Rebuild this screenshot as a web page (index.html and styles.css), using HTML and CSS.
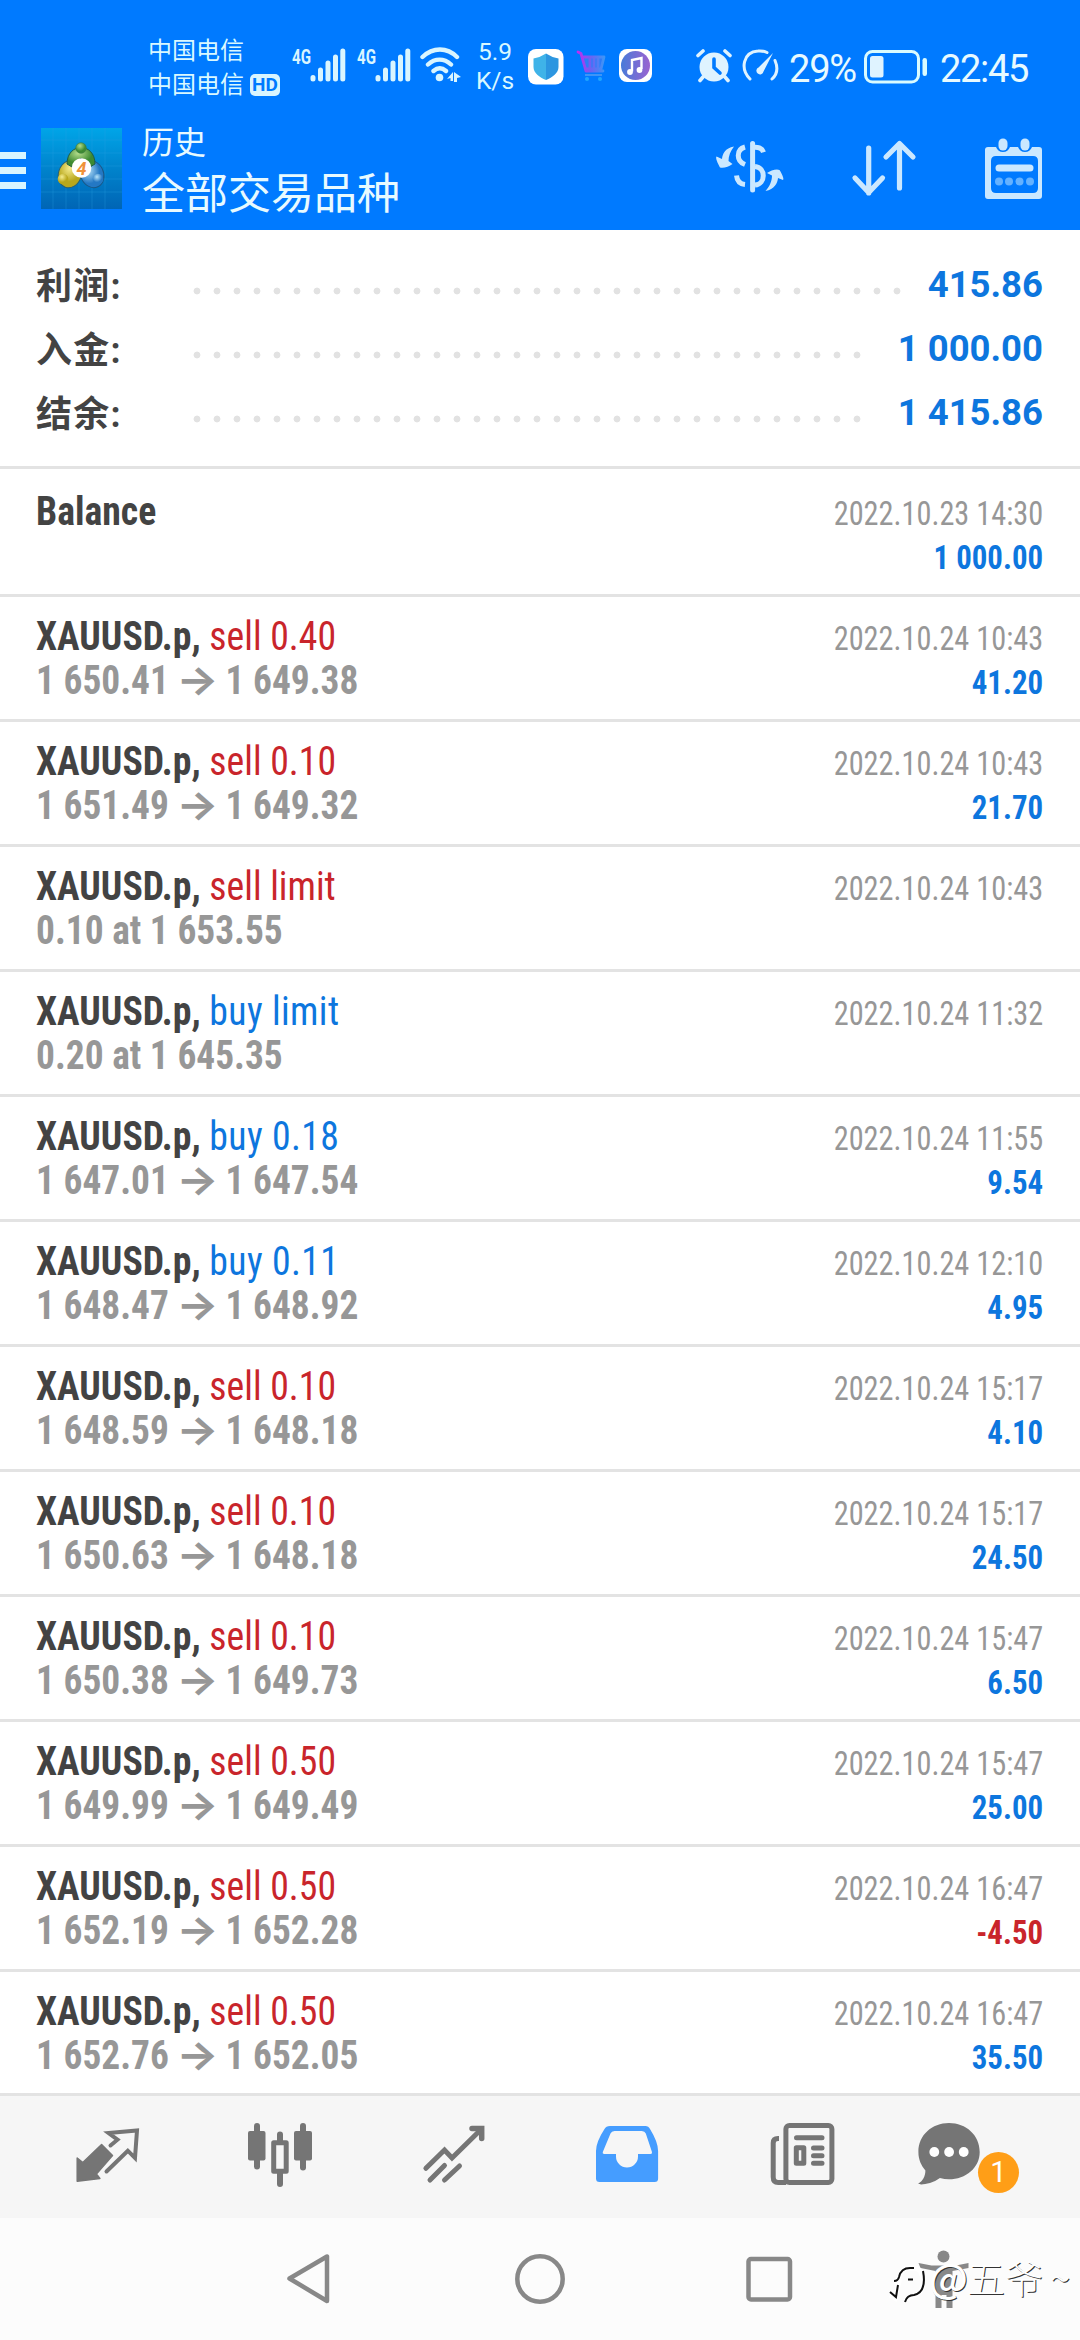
FILE: index.html
```html
<!DOCTYPE html>
<html lang="zh-CN">
<head>
<meta charset="utf-8">
<title>历史</title>
<link rel="stylesheet" href="styles.css">
</head>
<body>
<div class="screen">
  <header class="header">
    <div class="status">
      <div class="carriers">
        <div>中国电信</div>
        <div class="carrier-hd">中国电信<span class="hd">HD</span></div>
      </div>
      <div class="signal"><span class="net">4G</span>
        <svg width="36" height="34" viewBox="0 0 36 34"><path d="M3 29.500v1.500M10.500 22v9M18 15v16M25.500 9v22M32.800 3v28"/></svg>
      </div>
      <div class="signal second"><span class="net">4G</span>
        <svg width="36" height="34" viewBox="0 0 36 34"><path d="M3 29.500v1.500M10.500 22v9M18 15v16M25.500 9v22M32.800 3v28"/></svg>
      </div>
      <svg class="wifi" width="42" height="36" viewBox="0 0 42 36">
        <path d="M2.500 10C13 0 27 0 37 10M8 17.500c7-6.500 16-6.500 23 0M13.500 24c4-3.500 8.500-3.500 12.500 0" fill="none" stroke="#d9f5ff" stroke-width="4.400" stroke-linecap="round"/>
        <circle cx="19.500" cy="30.500" r="3.800" fill="#d9f5ff"/>
        <path d="M27 32l6-7v9h-2.500v-3zM34 25l7 5-4 1v4h-3z" fill="#d9f5ff"/>
      </svg>
      <div class="speed"><div>5.9</div><div>K/s</div></div>
      <div class="apps">
        <svg class="shield" width="36" height="36" viewBox="0 0 36 36">
          <rect width="35.500" height="35.500" rx="8" fill="#fff"/>
          <path d="M18 4.500Q24 8.500 30.500 9.500V18c0 6-6 10.500-12.500 13z" fill="#2c96e0"/><path d="M18 4.500Q12 8.500 5.500 9.500V18c0 6 6 10.500 12.500 13z" fill="#3fb3e8"/>
        </svg>
        <svg class="cart" width="32" height="34" viewBox="0 0 32 34">
          <defs><linearGradient id="cart" x1="0" x2="1"><stop offset="0" stop-color="#c22bf0"/><stop offset=".5" stop-color="#6b63f2"/><stop offset="1" stop-color="#3e94f6"/></linearGradient></defs>
          <path d="M7 8H28l-3 12H10z" fill="#4a7df4" fill-opacity=".6"/>
          <path d="M2 3l3 1.500 5 17.500H27M7 8H28l-3 12H10M14 10v9M18 10v9M22 10v9" fill="none" stroke="url(#cart)" stroke-width="2.800" stroke-linecap="round" stroke-linejoin="round"/>
          <circle cx="11" cy="30" r="2" fill="#1fa5ff"/><circle cx="24" cy="30" r="2" fill="#1fa5ff"/><path d="M9 26H26" stroke="#3e94f6" stroke-width="2"/>
        </svg>
        <svg class="music" width="34" height="34" viewBox="0 0 34 34">
          <defs><linearGradient id="disc" x1="0" x2="1"><stop offset="0" stop-color="#487bd9"/><stop offset="1" stop-color="#9a63d0"/></linearGradient></defs>
          <rect width="33" height="33" rx="8" fill="#fff"/><circle cx="16.500" cy="16.500" r="14.500" fill="url(#disc)"/>
          <path d="M13 22.500V11l9.500-2v11" fill="none" stroke="#fff" stroke-width="2.400"/><circle cx="11" cy="23" r="2.900" fill="#fff"/><circle cx="20.500" cy="21" r="2.900" fill="#fff"/>
        </svg>
      </div>
      <svg class="alarm" width="36" height="34" viewBox="0 0 36 34">
        <circle cx="18" cy="18" r="14.500" fill="#dff3ff"/>
        <path d="M2 6.500L7 2M34 6.500L29 2M7 28l-3 3.500M29 28l3 3.500" stroke="#dff3ff" stroke-width="3.600" stroke-linecap="round"/>
        <path d="M18 10v8.500l6 5.500" fill="none" stroke="#007aff" stroke-width="3.600" stroke-linecap="round"/>
      </svg>
      <svg class="gauge" width="38" height="34" viewBox="0 0 38 34">
        <path d="M8 30C-2 20 1 3 16 2q5-.500 9 1.500M33 11.500c3 7 2 14-3 18.500" fill="none" stroke="#dff3ff" stroke-width="3" stroke-linecap="round"/>
        <path d="M31 4L16.500 18.500a3.600 3.600 0 1 0 5 4z" fill="#dff3ff"/>
      </svg>
      <div class="percent">29%</div>
      <svg class="battery" width="66" height="34" viewBox="0 0 66 34">
        <rect x="1.500" y="1.500" width="53" height="30.500" rx="7" fill="none" stroke="#d9fbff" stroke-width="3"/>
        <rect x="6" y="6" width="13.500" height="21.500" rx="2.500" fill="#dff3ff"/><rect x="58.500" y="8" width="4.500" height="18" rx="2.200" fill="#d9fbff"/>
      </svg>
      <div class="clock">22:45</div>
    </div>
    <div class="appbar">
      <div class="menu"><i></i><i></i><i></i></div>
      <svg class="logo" width="81" height="81" viewBox="0 0 81 81">
        <defs>
          <linearGradient id="sky" x1="0" y1="0" x2="0" y2="1"><stop offset="0" stop-color="#00a5e8"/><stop offset=".5" stop-color="#0083cc"/><stop offset="1" stop-color="#0065b5"/></linearGradient>
          <radialGradient id="gr" cx=".4" cy=".3"><stop offset="0" stop-color="#b5dd8c"/><stop offset="1" stop-color="#3d8a32"/></radialGradient>
          <radialGradient id="ye" cx=".4" cy=".3"><stop offset="0" stop-color="#f5ec8f"/><stop offset="1" stop-color="#b9a81c"/></radialGradient>
          <radialGradient id="bl" cx=".4" cy=".3"><stop offset="0" stop-color="#b9e4fa"/><stop offset="1" stop-color="#2478c4"/></radialGradient>
        </defs>
        <rect width="81" height="81" fill="url(#sky)"/>
        <path d="M12 0v81M25 0v81M38 0v81M51 0v81M64 0v81M0 12h81M0 25h81M0 38h81M0 51h81M0 64h81" stroke="#2ba3e0" stroke-opacity=".3"/>
        <ellipse cx="29" cy="46" rx="11.500" ry="14" fill="url(#ye)" stroke="#286075" transform="rotate(20 29 46)"/>
        <ellipse cx="51" cy="46" rx="11.500" ry="14" fill="url(#bl)" stroke="#1a5785" transform="rotate(-25 51 46)"/>
        <path d="M26 36c0-22 28-22 28 0l-5 3-9-9-9 9z" fill="url(#gr)" stroke="#1f5c4a"/>
        <circle cx="40" cy="20" r="5.300" fill="url(#gr)" stroke="#3d7a45" stroke-width=".6"/><circle cx="22" cy="51" r="5.300" fill="url(#ye)"/><circle cx="57" cy="51" r="5.300" fill="url(#bl)"/>
        <circle cx="40.500" cy="40" r="9.800" fill="#fff"/>
        <text x="40.500" y="46.500" text-anchor="middle" font-family="Roboto, sans-serif" font-weight="700" font-style="italic" font-size="18" fill="#f0923a">4</text>
      </svg>
      <div class="titles"><div class="title">历史</div><div class="subtitle">全部交易品种</div></div>
      <svg class="act money" width="72" height="64" viewBox="0 0 72 64">
        <g fill="none" stroke="#cbe8ff" stroke-width="5">
          <path d="M38.600 8.500v46.500" stroke-linecap="round"/>
          <path d="M31 12c-9 2.500-9 14 0 17.500M41 12.200c5 0 7.500 2 8.500 5M41 31.500c11 1 11 17.500 0 18.500M31 49.500c-5-.500-8-4-8.500-9" />
        </g>
        <path d="M20 11.500C11 13 8.500 19 8 24L2.500 21.500c-1.500 2 2 8 3.500 11 3 1 9-.500 12.500-3.500l-4-3c0-5 2-10 5.500-14.500zM51.500 56c9-1.500 12-8 12.500-13l5 2c1.500-1.500-2-8-3.500-10-3-1.500-9 .500-12.500 3l5 2.500c0 6-2.500 11-6.500 15.500z" fill="#cbe8ff"/>
      </svg>
      <svg class="act sort" width="72" height="64" viewBox="0 0 72 64">
        <path d="M21.700 14v45M8 44l13.700 14.500L35.500 44M52.500 54V10M39 23L52.500 9.500 66 23" fill="none" stroke="#cbe8ff" stroke-width="5.200" stroke-linecap="round" stroke-linejoin="round"/>
      </svg>
      <svg class="act" width="66" height="68" viewBox="0 0 66 68">
        <path d="M8 14h8q2 5 7 5t7-5h8q2 5 7 5t7-5h7q3 0 3 3v46q0 3-3 3H8q-3 0-3-3V17q0-3 3-3zM16 23q-5 0-5 5v27q0 5 5 5H53q5 0 5-5V28q0-5-5-5z" fill="#cbe8ff" fill-rule="evenodd"/>
        <rect x="18.500" y="5.500" width="9" height="12" rx="4.500" fill="#cbe8ff"/><rect x="40.500" y="5.500" width="9" height="12" rx="4.500" fill="#cbe8ff"/>
        <path d="M19 35H50" stroke="#cbe8ff" stroke-width="7" stroke-linecap="round"/>
        <g fill="#65b2ff"><circle cx="19" cy="48.500" r="4"/><circle cx="29" cy="48.500" r="4"/><circle cx="39.500" cy="48.500" r="4"/><circle cx="50" cy="48.500" r="4"/></g>
      </svg>
    </div>
  </header>

  <section class="summary">
    <div class="sum-row"><span class="sum-label">利润:</span><span class="dots dots-long"></span><span class="sum-value">415.86</span></div>
    <div class="sum-row"><span class="sum-label">入金:</span><span class="dots"></span><span class="sum-value">1 000.00</span></div>
    <div class="sum-row"><span class="sum-label">结余:</span><span class="dots"></span><span class="sum-value">1 415.86</span></div>
  </section>

  <main class="list">
    <div class="row first"><div class="left"><div class="name">Balance</div></div><div class="right"><div class="date">2022.10.23 14:30</div><div class="profit">1 000.00</div></div></div>
    <div class="row"><div class="left"><div class="name">XAUUSD.p, <span class="sell">sell 0.40</span></div><div class="price">1 650.41 <span class="arrow">→</span> 1 649.38</div></div><div class="right"><div class="date">2022.10.24 10:43</div><div class="profit">41.20</div></div></div>
    <div class="row"><div class="left"><div class="name">XAUUSD.p, <span class="sell">sell 0.10</span></div><div class="price">1 651.49 <span class="arrow">→</span> 1 649.32</div></div><div class="right"><div class="date">2022.10.24 10:43</div><div class="profit">21.70</div></div></div>
    <div class="row"><div class="left"><div class="name">XAUUSD.p, <span class="sell">sell limit</span></div><div class="price">0.10 at 1 653.55</div></div><div class="right"><div class="date">2022.10.24 10:43</div></div></div>
    <div class="row"><div class="left"><div class="name">XAUUSD.p, <span class="buy">buy limit</span></div><div class="price">0.20 at 1 645.35</div></div><div class="right"><div class="date">2022.10.24 11:32</div></div></div>
    <div class="row"><div class="left"><div class="name">XAUUSD.p, <span class="buy">buy 0.18</span></div><div class="price">1 647.01 <span class="arrow">→</span> 1 647.54</div></div><div class="right"><div class="date">2022.10.24 11:55</div><div class="profit">9.54</div></div></div>
    <div class="row"><div class="left"><div class="name">XAUUSD.p, <span class="buy">buy 0.11</span></div><div class="price">1 648.47 <span class="arrow">→</span> 1 648.92</div></div><div class="right"><div class="date">2022.10.24 12:10</div><div class="profit">4.95</div></div></div>
    <div class="row"><div class="left"><div class="name">XAUUSD.p, <span class="sell">sell 0.10</span></div><div class="price">1 648.59 <span class="arrow">→</span> 1 648.18</div></div><div class="right"><div class="date">2022.10.24 15:17</div><div class="profit">4.10</div></div></div>
    <div class="row"><div class="left"><div class="name">XAUUSD.p, <span class="sell">sell 0.10</span></div><div class="price">1 650.63 <span class="arrow">→</span> 1 648.18</div></div><div class="right"><div class="date">2022.10.24 15:17</div><div class="profit">24.50</div></div></div>
    <div class="row"><div class="left"><div class="name">XAUUSD.p, <span class="sell">sell 0.10</span></div><div class="price">1 650.38 <span class="arrow">→</span> 1 649.73</div></div><div class="right"><div class="date">2022.10.24 15:47</div><div class="profit">6.50</div></div></div>
    <div class="row"><div class="left"><div class="name">XAUUSD.p, <span class="sell">sell 0.50</span></div><div class="price">1 649.99 <span class="arrow">→</span> 1 649.49</div></div><div class="right"><div class="date">2022.10.24 15:47</div><div class="profit">25.00</div></div></div>
    <div class="row"><div class="left"><div class="name">XAUUSD.p, <span class="sell">sell 0.50</span></div><div class="price">1 652.19 <span class="arrow">→</span> 1 652.28</div></div><div class="right"><div class="date">2022.10.24 16:47</div><div class="profit loss">-4.50</div></div></div>
    <div class="row"><div class="left"><div class="name">XAUUSD.p, <span class="sell">sell 0.50</span></div><div class="price">1 652.76 <span class="arrow">→</span> 1 652.05</div></div><div class="right"><div class="date">2022.10.24 16:47</div><div class="profit">35.50</div></div></div>
  </main>

  <nav class="tabs">
    <div class="tab"><svg viewBox="0 0 72 72">
      <path d="M5.200 39l5.600 4.500L29.600 25.500 40.500 36.500 24.400 55l3.500 4.500L5.200 62.200z" fill="#757575" stroke="#757575" stroke-width="1.500" stroke-linejoin="round"/>
      <path d="M38.500 26.500l7-5.800-9-6.700 28.500-2.500-2 27.500-7.200-7.300L34.500 52.500" fill="none" stroke="#757575" stroke-width="4" stroke-linecap="round"/></svg></div>
    <div class="tab"><svg viewBox="0 0 72 72" fill="#757575">
      <rect x="3" y="12" width="17.500" height="29.500" rx="2"/><rect x="9" y="4" width="6" height="46.500" rx="3"/>
      <rect x="49" y="12" width="18" height="29.500" rx="2"/><rect x="55" y="4" width="6" height="47.500" rx="3"/>
      <path d="M35 15.500v7M35 54v11" stroke="#757575" stroke-width="6" stroke-linecap="round"/><rect x="28.700" y="23.700" width="12.500" height="28.500" fill="none" stroke="#757575" stroke-width="5" stroke-linejoin="round"/></svg></div>
    <div class="tab"><svg viewBox="0 0 72 72" fill="none" stroke="#757575" stroke-width="5">
      <path d="M7.900 49.300L26.500 31l7.500 8L62.500 11M12 61L26.500 46.500M26.500 61L41.500 47" stroke-linecap="round"/><path d="M54 9.500H63.700V19.500" stroke-width="5.500" stroke-linecap="round"/></svg></div>
    <div class="tab"><svg viewBox="0 0 72 72">
      <path d="M19 7H54.500q3 0 4.500 3 8.100 13 8.100 22V59.500q0 3.500-3.500 3.500H8.500q-3.500 0-3.500-3.500V32q0-9 8.500-22 1.500-3 5.500-3zM23.500 12q-3 0-4 2.500L12 32.500q-1 2.500 1.500 2.500H25v2.500a11 11 0 0 0 22 0V35H59.500q2 0 1.300-2.500l-6-18q-1-2.500-4-2.500z" fill="#459dff" fill-rule="evenodd"/></svg></div>
    <div class="tab"><svg viewBox="0 0 72 72" fill="none" stroke="#757575" stroke-width="5">
      <rect x="21.900" y="6.500" width="46" height="57" rx="3.500"/><path d="M15 19.500h-1q-4.800 0-4.800 4.500V58q0 5.500 5 5.500h8"/>
      <path d="M32.500 18.700H58M49.500 29H58M49.500 36.700H58M49.500 44.300H58" stroke-linecap="round"/><rect x="32.300" y="28.800" width="7.500" height="15.500" stroke-linejoin="round"/></svg></div>
    <div class="tab chat"><svg viewBox="0 0 72 72">
      <path d="M35 4C18 4 4.400 16 4.400 33c0 8 3 13.500 7 18.500 0 6-3 11-7 13 0 2 13 1 21.500-5.500 3 .900 6 1.300 9 1.300 17 0 30.800-11.500 30.800-27.300C65.700 16 52 4 35 4z" fill="#757575"/>
      <g fill="#fff"><circle cx="20.300" cy="33" r="4.900"/><circle cx="35.100" cy="33" r="4.900"/><circle cx="49.700" cy="33" r="4.900"/></g></svg><span class="badge">1</span></div>
  </nav>

  <footer class="navbar">
    <svg viewBox="0 0 60 60" fill="none" stroke="#888" stroke-width="4.500" stroke-linejoin="round"><path d="M8.500 30.500L46 8.500V53z"/></svg>
    <svg viewBox="0 0 60 60" fill="none" stroke="#888" stroke-width="4.500"><circle cx="30" cy="31" r="22.700"/></svg>
    <svg viewBox="0 0 60 60" fill="none" stroke="#888" stroke-width="4.500"><rect x="9.500" y="11" width="41.500" height="40.500" rx="2.500"/></svg>
    <svg viewBox="0 0 60 60" fill="#888"><circle cx="30.500" cy="8.500" r="6"/><path d="M5.500 15l13 2.500H43L55.500 15v5L39.500 23v37h-6V47h-5v13h-6V23L7.500 20z"/></svg>
  </footer>

  <div class="watermark">
    <svg width="42" height="48" viewBox="0 0 42 48" fill="none">
      <path d="M4 38l5 3 4-16H8c6-1 6-14 14-14h6c12 0 12 26 0 28-3 0-6 2-7 5" stroke="#fff" stroke-width="5"/>
      <path d="M8 24q4 0 5-4 2-9 11-9h4M22 22.500h5M12 28L10 40l-6-5M37 14q4 21-9 24-7 0-9 7" stroke="#111" stroke-width="2"/>
    </svg><span class="wm-text"><span class="wm-at">@</span>五爷<span class="wm-tilde">~</span></span>
  </div>
</div>
</body>
</html>
```
FILE: styles.css
```css
* { box-sizing: border-box; }
body { margin: 0; background: #fff; font-family: Roboto, "Noto Sans CJK SC", sans-serif; }
svg { display: block; flex: none; }
.screen { position: relative; display: flex; flex-direction: column; width: 1080px; height: 2340px; overflow: hidden; background: #fff; }

.header { flex: none; height: 230px; background: #007aff; color: #e8faff; }
.status { display: flex; align-items: flex-start; height: 108px; padding: 33px 0 0 148px; }
.carriers { width: 144px; padding-top: 1px; font-size: 24px; line-height: 34px; color: #d9f8ff; white-space: nowrap; }
.carrier-hd { display: flex; align-items: center; }
.hd { width: 30px; height: 22px; margin-left: 6px; border-radius: 5px; background: #d9f5ff; color: #007aff; font-size: 19px; font-weight: 700; line-height: 22px; text-align: center; }
.signal { display: flex; align-items: flex-start; width: 65px; padding-top: 15px; }
.signal path { stroke: #d9f5ff; stroke-width: 5; stroke-linecap: round; }
.net { width: 18px; height: 20px; font-size: 21px; font-weight: 700; line-height: 18px; color: #d9f5ff; transform: scaleX(.72); transform-origin: left; }
.second { width: 63px; }
.wifi { margin-top: 14px; }
.speed { width: 66px; padding-top: 5px; font-size: 24.500px; line-height: 28.500px; text-align: center; color: #d9f8ff; }
.apps { display: flex; width: 168px; padding-top: 16px; }
.cart { margin-left: 12px; }
.music { margin-left: 11px; }
.alarm { margin-top: 16px; }
.gauge { margin: 16px 0 0 10px; }
.percent { width: 75px; margin-left: 9px; padding-top: 14px; font-size: 38px; line-height: 44px; letter-spacing: -1.200px; }
.battery { margin-top: 17px; }
.clock { margin-left: 10px; padding-top: 14px; font-size: 38px; line-height: 44px; letter-spacing: -1.300px; }

.appbar { display: flex; height: 122px; padding-top: 20px; }
.menu { display: flex; flex: none; flex-direction: column; gap: 8px; width: 41px; padding-top: 24px; }
.menu i { width: 26px; height: 7px; background: #d9f5ff; }
.titles { flex: none; width: 592px; padding-left: 20px; }
.title { margin-top: -8px; font-size: 32px; line-height: 46px; }
.subtitle { margin-top: -2px; font-size: 43px; line-height: 60px; }
.money { margin-top: 7px; }
.sort { margin: 6px 0 0 61px; }
.appbar .act:last-child { margin: 5px 0 0 61px; }

.summary { flex: none; height: 239px; padding: 22px 37px 0 36px; border-bottom: 3px solid #e3e3e3; }
.sum-row { display: flex; align-items: center; height: 64px; }
.sum-label { width: 151px; margin-top: -3px; font-size: 36px; font-weight: 700; letter-spacing: 1.200px; color: #434343; }
.dots { width: 680px; height: 20px; margin-top: 13px; background: radial-gradient(circle, #e2e2e2 3px, transparent 3.800px) 0 0 / 20px 20px; }
.dots-long { width: 720px; }
.sum-value { margin-left: auto; font-size: 36.500px; font-weight: 700; color: #0d76de; }

.list { flex: none; height: 1624px; overflow: hidden; font-family: "Roboto Condensed", Roboto, sans-serif; font-stretch: 75%; }
.row { display: flex; justify-content: space-between; height: 125px; padding: 17px 37px 0 36px; border-bottom: 3px solid #e3e3e3; white-space: nowrap; }
.first { height: 128px; padding-top: 20px; }
.name { font-size: 41px; font-weight: 700; line-height: 44px; color: #434343; transform: scaleX(.92); transform-origin: left; }
.name span { font-weight: 400; }
.sell { color: #c9252b; }
.buy { color: #0d76de; letter-spacing: .4px; }
.price { font-size: 41px; font-weight: 700; line-height: 44px; color: #979797; transform: scaleX(.912); transform-origin: left; }
.arrow { display: inline-block; height: 44px; margin: 0 2.500px; font-family: Inter, sans-serif; font-size: 40px; line-height: 44px; vertical-align: top; transform: scaleX(1.220); }
.right { padding-top: 3px; text-align: right; }
.date { font-size: 33px; line-height: 44px; color: #979797; transform: scaleX(.918); transform-origin: right; }
.profit { font-size: 33px; font-weight: 700; line-height: 44px; color: #0d76de; transform: scaleX(.936); transform-origin: right; }
.loss { color: #c9252b; }

.tabs { flex: none; display: flex; height: 125px; padding: 23px 0 0 22px; border-top: 3px solid #e3e3e3; background: #f6f6f6; }
.tab { width: 172.800px; }
.tab svg { width: 72px; height: 72px; margin: 0 auto; }
.chat { position: relative; }
.chat svg { margin-left: 28px; }
.badge { position: absolute; left: 92px; top: 33px; width: 41px; height: 41px; border-radius: 50%; background: #ff9e17; color: #fff; font-size: 29px; line-height: 41px; text-align: center; }

.navbar { display: flex; flex: 1; padding: 30px 0 0 281px; background: #fcfcfc; gap: 169px; }
.navbar svg { width: 60px; height: 60px; }
.navbar svg:nth-child(4) { margin-left: -55px; }
.watermark { position: absolute; left: 886px; top: 2257px; display: flex; }
.wm-text { display: flex; margin: -6px 0 0 1px; font-family: "Noto Sans CJK SC", sans-serif; font-size: 38px; font-weight: 300; line-height: 52px; color: #fff; text-shadow: 1px 1px 0 #333; }
.wm-at { width: 38px; font-size: 40px; font-weight: 500; line-height: 50px; }
.wm-tilde { margin-left: 7px; }
```
